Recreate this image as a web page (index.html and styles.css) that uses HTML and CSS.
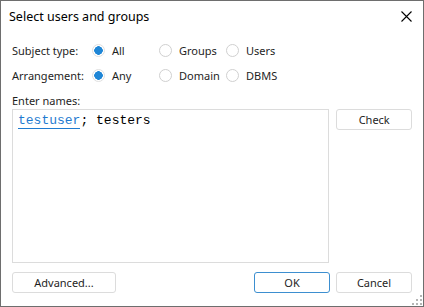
FILE: index.html
```html
<!DOCTYPE html>
<html lang="en">
<head>
    <meta charset="UTF-8">
    <title>Select users and groups</title>
    <link rel="stylesheet" href="styles.css">
</head>
<body>
    <div class="dialog">
        <div class="title-bar">
            <span class="title">Select users and groups</span>
            <svg class="close" width="11" height="11" viewBox="0 0 11 11">
                <path d="M0.5 0.5 L10.5 10.5 M10.5 0.5 L0.5 10.5" stroke="#000" stroke-width="1.1" fill="none"/>
            </svg>
        </div>
        <div class="body">
            <div class="option-row">
                <span class="row-label">Subject type:</span>
                <label class="radio checked"><span class="dot"></span>All</label>
                <label class="radio"><span class="dot"></span>Groups</label>
                <label class="radio"><span class="dot"></span>Users</label>
            </div>
            <div class="option-row">
                <span class="row-label">Arrangement:</span>
                <label class="radio checked"><span class="dot"></span>Any</label>
                <label class="radio"><span class="dot"></span>Domain</label>
                <label class="radio"><span class="dot"></span>DBMS</label>
            </div>
            <div class="names-label">Enter names:</div>
            <div class="names-row">
                <div class="names-box"><span class="resolved">testuser</span>; testers</div>
                <button class="btn">Check</button>
            </div>
            <div class="footer">
                <button class="btn btn-wide">Advanced...</button>
                <div class="footer-right">
                    <button class="btn btn-default">OK</button>
                    <button class="btn">Cancel</button>
                </div>
            </div>
        </div>
        <svg class="grip" width="10" height="10" viewBox="0 0 10 10">
            <rect x="8" y="0" width="2" height="2" fill="#b5b5b5"/>
            <rect x="4" y="4" width="2" height="2" fill="#b5b5b5"/>
            <rect x="8" y="4" width="2" height="2" fill="#b5b5b5"/>
            <rect x="0" y="8" width="2" height="2" fill="#b5b5b5"/>
            <rect x="4" y="8" width="2" height="2" fill="#b5b5b5"/>
            <rect x="8" y="8" width="2" height="2" fill="#b5b5b5"/>
        </svg>
    </div>
</body>
</html>
```

FILE: styles.css
```css
body {
    margin: 0;
    font-family: 'Noto Sans', 'Open Sans', sans-serif;
    font-size: 11px;
    color: #1e1e1e;
    background: #fff;
}
.dialog {
    position: relative;
    width: 422px;
    height: 305px;
    border: 1px solid #6e6e6e;
    background: #fff;
    display: flex;
    flex-direction: column;
}
.title-bar {
    height: 31px;
    display: flex;
    align-items: center;
    justify-content: space-between;
    padding: 0 11px 0 8px;
}
.title {
    font-size: 12.5px;
    color: #000;
}
.body {
    padding: 6px 11px 0 11px;
    display: flex;
    flex-direction: column;
    flex: 1;
}
.option-row {
    height: 25px;
    display: flex;
    align-items: center;
}
.row-label {
    width: 80px;
}
.radio {
    display: flex;
    align-items: center;
    width: 67px;
}
.radio .dot {
    width: 11px;
    height: 11px;
    border: 1px solid #d0d0d0;
    border-radius: 50%;
    margin-right: 7px;
    box-sizing: content-box;
}
.radio.checked .dot {
    border-color: #e0e0e0;
    background: radial-gradient(circle, #1f86d6 0 4px, #fff 4.5px);
}
.names-label {
    margin-top: 5px;
    height: 16px;
    line-height: 16px;
}
.names-row {
    display: flex;
    gap: 7px;
    height: 154px;
}
.names-box {
    width: 307px;
    border: 1px solid #dcdcdc;
    padding: 3px 5px;
    font-family: 'Liberation Mono', monospace;
    font-size: 13px;
    color: #000;
}
.resolved {
    color: #1f7bd0;
    border-bottom: 1px solid #1f7bd0;
}
.btn {
    width: 76px;
    height: 21px;
    border: 1px solid #dcdcdc;
    border-radius: 3px;
    background: #fff;
    font-family: inherit;
    font-size: 11px;
    color: #1e1e1e;
    padding: 0;
}
.btn-wide {
    width: 104px;
}
.btn-default {
    border-color: #3d8fd0;
}
.footer {
    margin-top: 9px;
    display: flex;
    justify-content: space-between;
}
.footer-right {
    display: flex;
    gap: 6px;
}
.grip {
    position: absolute;
    right: 1px;
    bottom: 1px;
}
```
